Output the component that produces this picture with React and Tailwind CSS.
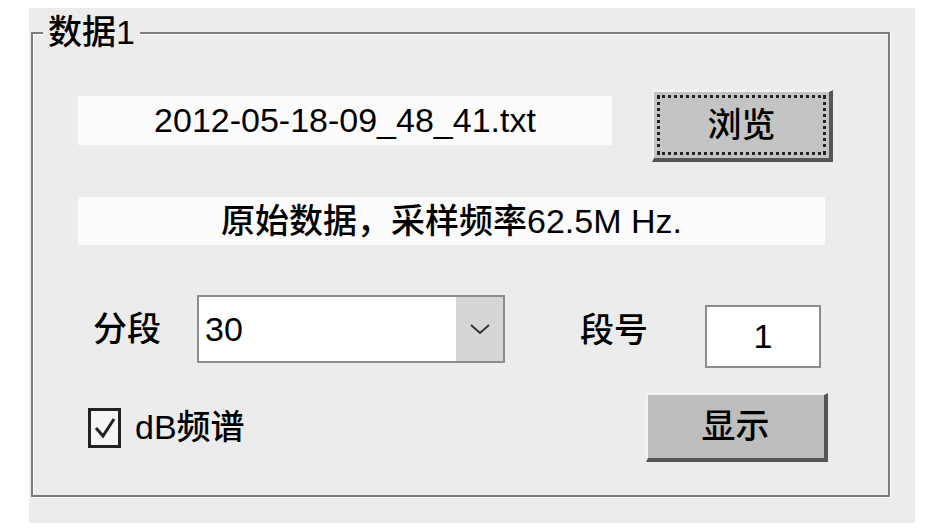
import React from "react";

const F = { fontFamily: '"Liberation Sans", "Noto Sans CJK SC", sans-serif' };

export default function App() {
  return (
    <div className="w-[945px] h-[531px] bg-white pt-[8px] pl-[29px]" style={F}>
      <div className="w-[886px] h-[515px] bg-[#ececec] pt-[24px] pl-[2px]">
        <div className="relative w-[859px] h-[465px] border-2 border-[#7c7c7c] shadow-[inset_1px_1px_0_#ffffff,1px_1px_0_#ffffff]">
          <span className="absolute left-[10px] top-[-20px] px-[5px] bg-[#ececec] text-[34px] leading-[36px] font-medium text-black">
            数据1
          </span>

          {/* row 1 */}
          <div className="flex items-start mt-[56px] pl-[45px]">
            <div className="mt-[6px] w-[534px] h-[49px] bg-[#fbfbfb] flex items-center justify-center text-[34px] text-black">
              2012-05-18-09_48_41.txt
            </div>
            <div className="ml-[40px] w-[181px] h-[72px] bg-[#c4c4c4] border-t-2 border-l-2 border-t-[#f4f4f4] border-l-[#f4f4f4] border-b-[4px] border-r-[4px] border-b-[#555555] border-r-[#555555] p-[3px]">
              <div className="w-full h-full border-[3px] border-dotted border-[#222222] flex items-center justify-center text-[34px] font-medium text-black">
                浏览
              </div>
            </div>
          </div>

          {/* row 2 */}
          <div className="mt-[35px] pl-[45px]">
            <div className="w-[747px] h-[48px] bg-[#fbfbfb] flex items-center justify-center text-[34px] font-medium text-black">
              原始数据，采样频率<span className="font-normal">62.5M Hz.</span>
            </div>
          </div>

          {/* row 3 */}
          <div className="flex items-start mt-[50px]">
            <div className="ml-[60px] mt-[14px] text-[34px] leading-[40px] font-medium text-black">分段</div>
            <div className="ml-[36px] w-[308px] h-[68px] border-2 border-[#8c8c8c] bg-white flex">
              <div className="flex-1 flex items-center pl-[6px] text-[34px] text-black">30</div>
              <div className="w-[47px] h-full bg-[#d6d6d6] flex items-center justify-center">
                <svg width="22" height="14" viewBox="0 0 22 14">
                  <path d="M2 3 L11 11 L20 3" fill="none" stroke="#333" strokeWidth="2" />
                </svg>
              </div>
            </div>
            <div className="ml-[75px] mt-[15px] text-[34px] leading-[40px] font-medium text-black">段号</div>
            <div className="ml-[57px] mt-[10px] w-[116px] h-[63px] border-2 border-[#8c8c8c] bg-white flex items-center justify-center text-[34px] text-black">
              1
            </div>
          </div>

          {/* row 4 */}
          <div className="flex items-center mt-[25px]">
            <div className="ml-[55px] w-[33px] h-[40px] border-[3px] border-[#222222] bg-[#f4f4f4] flex items-center justify-center">
              <svg width="24" height="26" viewBox="0 0 24 26">
                <path d="M3 13 L10 21 L21 4" fill="none" stroke="#222" strokeWidth="3" />
              </svg>
            </div>
            <div className="ml-[14px] text-[34px] font-medium text-black">dB频谱</div>
            <div className="ml-[401px] w-[182px] h-[69px] bg-[#bdbdbd] border-t-2 border-l-2 border-t-[#f4f4f4] border-l-[#f4f4f4] border-b-[4px] border-r-[4px] border-b-[#555555] border-r-[#555555] flex items-center justify-center text-[34px] font-medium text-black">
              显示
            </div>
          </div>
        </div>
      </div>
    </div>
  );
}
